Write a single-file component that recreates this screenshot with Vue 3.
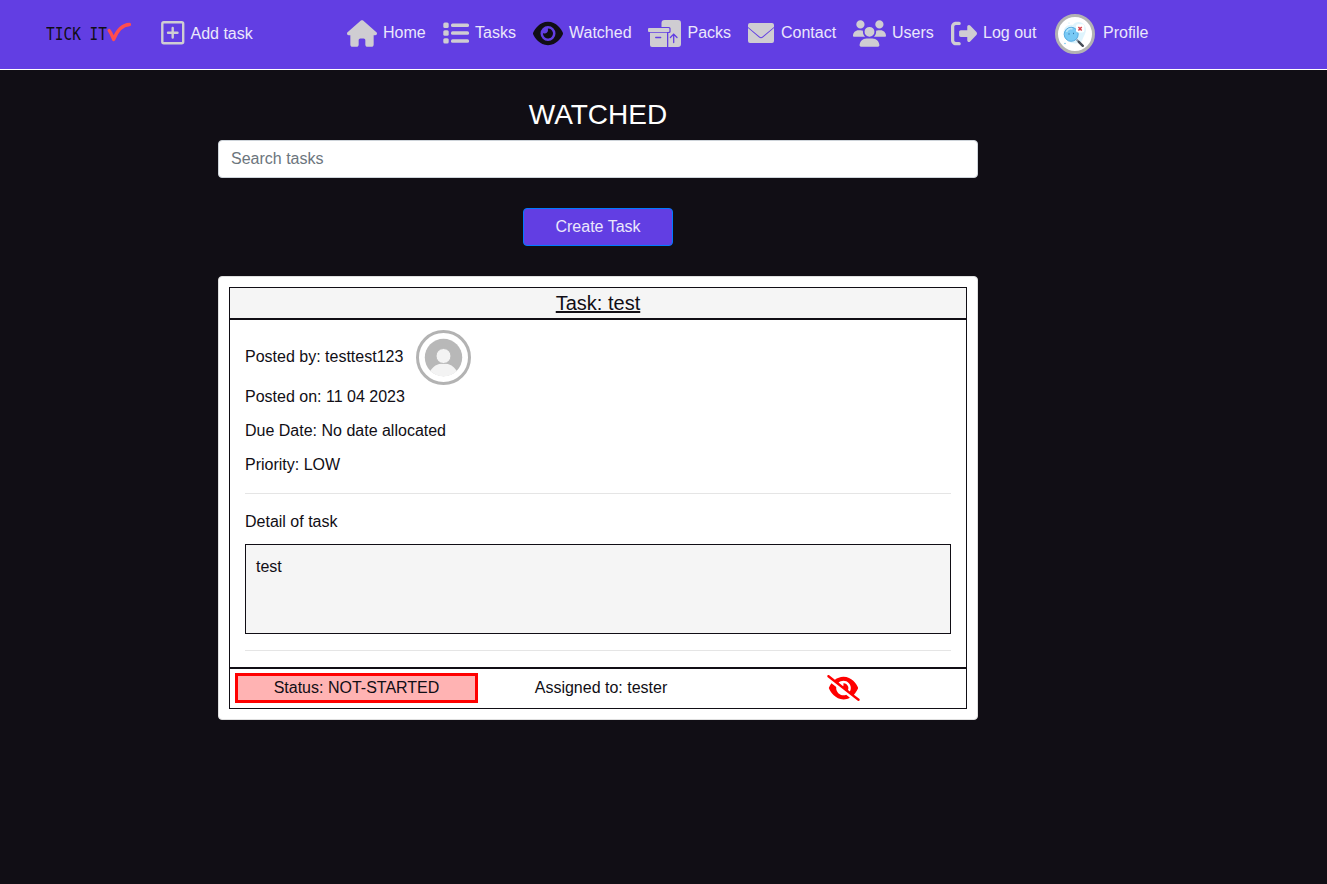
<script setup>
const links = [
  { id: 'home', label: 'Home' },
  { id: 'tasks', label: 'Tasks' },
  { id: 'watched', label: 'Watched' },
  { id: 'packs', label: 'Packs' },
  { id: 'contact', label: 'Contact' },
  { id: 'users', label: 'Users' },
  { id: 'logout', label: 'Log out' },
  { id: 'profile', label: 'Profile' }
]
</script>

<template>
  <div class="page">
    <header class="nav">
      <svg class="logo" width="88" height="24" viewBox="0 0 88 24">
        <text x="0" y="18" textLength="61" lengthAdjust="spacingAndGlyphs">TICK IT</text>
        <path d="M63.200 8.500c2 2.500 3 5.500 4.500 9C70.500 10 75.500 2.800 83.500 2.500" fill="none" stroke="#ff4d4d" stroke-width="3.300" stroke-linecap="round" stroke-linejoin="round" />
      </svg>
      <a class="add">
        <svg width="24" height="24" viewBox="0 0 24 24" fill="none" stroke="#cfcdd2" stroke-linecap="round">
          <rect x="1.300" y="1.300" width="20.900" height="20.900" rx="1.500" stroke-width="2.400" />
          <path d="M11.700 7v9.500M7 11.700h9.500" stroke-width="2.400" />
        </svg>
        <span>Add task</span>
      </a>
      <nav class="links">
        <a v-for="link in links" :key="link.id" class="link" :class="link.id">
          <svg v-if="link.id === 'home'" width="30" height="27" viewBox="0 0 576 512"><path d="M575.8 255.5c0 18-15 32.1-32 32.1h-32l.7 160.2c0 2.7-.2 5.4-.5 8.1V472c0 22.1-17.9 40-40 40H456c-1.1 0-2.200 0-3.300-.1c-1.400 .1-2.800 .1-4.200 .1H416 392c-22.1 0-40-17.9-40-40V448 384c0-17.7-14.3-32-32-32H256c-17.7 0-32 14.3-32 32v64 24c0 22.1-17.9 40-40 40H160 128.1c-1.500 0-3-.1-4.500-.2c-1.200 .1-2.400 .2-3.600 .2H104c-22.1 0-40-17.9-40-40V360c0-.9 0-1.900 .1-2.800V287.600H32c-18 0-32-14-32-32.100c0-9 3-17 10-24L266.400 8c7-7 15-8 22-8s15 2 21 7L564.800 231.500c8 7 12 15 11 24z" /></svg>
          <svg v-else-if="link.id === 'tasks'" width="26" height="22" viewBox="0 0 26 22">
            <rect x=".3" y=".5" width="5.400" height="5.400" rx="1.500" /><rect x=".3" y="8.300" width="5.400" height="5.400" rx="1.500" /><rect x=".3" y="16.200" width="5.400" height="5.400" rx="1.500" />
            <rect x="8" y="1.500" width="18" height="3.400" rx="1.500" /><rect x="8" y="9.300" width="18" height="3.400" rx="1.500" /><rect x="8" y="17.300" width="18" height="3.400" rx="1.500" />
          </svg>
          <svg v-else-if="link.id === 'watched'" width="30" height="27" viewBox="0 0 576 512"><path d="M288 32c-80.8 0-145.500 36.800-192.600 80.600C48.600 156 17.300 208 2.500 243.700c-3.300 7.900-3.300 16.700 0 24.600C17.300 304 48.600 356 95.400 399.400C142.500 443.200 207.200 480 288 480s145.500-36.800 192.600-80.600c46.800-43.500 78.100-95.400 93-131.100c3.300-7.900 3.300-16.700 0-24.600c-14.900-35.700-46.200-87.700-93-131.100C433.500 68.800 368.800 32 288 32zM144 256a144 144 0 1 1 288 0 144 144 0 1 1 -288 0zm144-64c0 35.300-28.700 64-64 64c-7.100 0-13.900-1.200-20.300-3.300c-5.500-1.800-11.900 1.600-11.700 7.400c.3 6.900 1.300 13.800 3.200 20.700c13.700 51.200 66.400 81.600 117.600 67.900s81.600-66.400 67.900-117.600c-11.100-41.500-47.800-69.400-88.600-71.100c-5.800-.2-9.200 6.100-7.400 11.700c2.100 6.400 3.300 13.200 3.300 20.300z" /></svg>
          <svg v-else-if="link.id === 'packs'" width="33" height="27" viewBox="0 0 33 27">
            <path d="M13.500 7V3q0-3 3-3H30q3 0 3 3V24q0 3-3 3H20.300V13h.7q1.600 0 1.600-1.600V8.600Q22.600 7 21 7z" />
            <path d="M1 8H20.500q.9 0 .9.900V11q0 .9-.9.900H1Q0 11.900 0 11V9Q0 8 1 8zM2 12.700H19V27H4q-2 0-2-2z" />
            <path class="cut" d="M7.700 17.500h5M25.700 22.500V14.300M22.400 17.500l3.300-3.400 3.300 3.400" />
          </svg>
          <svg v-else-if="link.id === 'contact'" width="26" height="20" viewBox="0 0 26 20">
            <path d="M2 0H24q2 0 2 2v2L14.500 13.500q-1.500 1.300-3 0L0 4V2Q0 0 2 0zM0 5L10.800 14.300q2.200 1.700 4.400 0L26 5V18q0 2-2 2H2q-2 0-2-2z" />
          </svg>
          <svg v-else-if="link.id === 'users'" width="33" height="27" viewBox="0 0 640 512"><path d="M144 0a80 80 0 1 1 0 160A80 80 0 1 1 144 0zM512 0a80 80 0 1 1 0 160A80 80 0 1 1 512 0zM0 298.700C0 239.800 47.800 192 106.700 192h42.700c15.900 0 31 3.500 44.600 9.700c-1.300 7.200-1.900 14.700-1.900 22.300c0 38.200 16.800 72.500 43.300 96H21.300C9.600 320 0 310.400 0 298.700zM405.300 320c26.600-23.500 43.300-57.800 43.300-96c0-7.600-.7-15-1.900-22.300c13.600-6.300 28.700-9.700 44.600-9.700h42.700C592.200 192 640 239.800 640 298.700c0 11.800-9.600 21.300-21.300 21.300H405.300zM224 224a96 96 0 1 1 192 0 96 96 0 1 1 -192 0zM128 485.300C128 411.700 187.700 352 261.300 352H378.700C452.300 352 512 411.700 512 485.300c0 14.700-11.900 26.700-26.700 26.700H154.700c-14.700 0-26.700-11.900-26.700-26.700z" /></svg>
          <svg v-else-if="link.id === 'logout'" width="26" height="27" viewBox="0 0 512 512" preserveAspectRatio="none"><path d="M377.900 105.900L500.700 228.700c7.200 7.200 11.300 17.100 11.300 27.300s-4.100 20.100-11.300 27.300L377.900 406.100c-6.400 6.400-15 9.900-24 9.900c-18.700 0-33.900-15.200-33.900-33.900l0-62.100-128 0c-17.700 0-32-14.300-32-32l0-64c0-17.700 14.300-32 32-32l128 0 0-62.100c0-18.700 15.200-33.900 33.900-33.900c9 0 17.600 3.600 24 9.900zM160 96L96 96c-17.700 0-32 14.300-32 32l0 256c0 17.700 14.300 32 32 32l64 0c17.700 0 32 14.300 32 32s-14.300 32-32 32l-64 0c-53 0-96-43-96-96L0 128C0 75 43 32 96 32l64 0c17.700 0 32 14.300 32 32s-14.300 32-32 32z" /></svg>
          <svg v-else width="40" height="40" viewBox="0 0 40 40">
            <circle cx="20" cy="20" r="18.500" fill="#fff" stroke="#b3b3b3" stroke-width="3" />
            <path d="M9 22C7 14 12 10 18 11C20 7 28 7 30 12C33 18 28 22 27 27C22 32 11 29 9 22z" fill="#dff4fd" />
            <path d="M21.500 25.500l2 2" stroke="#8a97a5" stroke-width="1.800" />
            <path d="M23.800 27.800l4 4" stroke="#454b55" stroke-width="2.400" stroke-linecap="round" />
            <circle cx="16.200" cy="20.300" r="7" fill="#78c9f5" stroke="#58ace0" stroke-width="1" />
            <path d="M11.500 18c1-3 4-4 6-3" stroke="#b8e6fb" stroke-width="1.500" fill="none" />
            <path d="M14 19.300v1.300M18.500 18.800v1.300" stroke="#28669a" stroke-width=".9" fill="none" />
            <rect x="21" y="10.300" width="8.300" height="8.300" rx="2" fill="#fff" />
            <path d="M23.400 12.900l3.300 3.500M26.700 12.900l-3.300 3.500" stroke="#d9434e" stroke-width="1.500" />
            <circle cx="10" cy="29.500" r=".7" fill="#55b7e8" /><circle cx="14" cy="9" r=".6" fill="#b9e7f9" />
          </svg>
          <span>{{ link.label }}</span>
        </a>
      </nav>
    </header>

    <main class="content">
      <h1>WATCHED</h1>
      <input class="search" type="text" placeholder="Search tasks" />
      <button class="create">Create Task</button>

      <article class="card">
        <h2 class="card-title">Task: test</h2>
        <section class="card-body">
          <div class="poster">
            <span>Posted by: testtest123</span>
            <svg width="55" height="55" viewBox="0 0 55 55">
              <circle cx="27.500" cy="27.500" r="26" fill="#fff" stroke="#b3b3b3" stroke-width="3" />
              <circle cx="27.500" cy="27.500" r="18.700" fill="#b8b8b8" />
              <path d="M14.200 41C17 36.500 21 33.500 27.500 33.500S38 36.500 40.800 41A18.700 18.700 0 0 1 14.200 41z" fill="#f3f3f3" />
              <circle cx="27.500" cy="26" r="7.500" fill="#f3f3f3" stroke="#b8b8b8" stroke-width="1" />
            </svg>
          </div>
          <p>Posted on: 11 04 2023</p>
          <p>Due Date: No date allocated</p>
          <p>Priority: LOW</p>
          <hr />
          <p>Detail of task</p>
          <div class="detail">test</div>
          <hr />
        </section>
        <footer class="card-footer">
          <div class="status">Status: NOT-STARTED</div>
          <div class="assigned">Assigned to: tester</div>
          <div class="unwatch">
            <svg width="33" height="26" viewBox="0 0 640 512"><path d="M38.800 5.100C28.400-3.100 13.300-1.200 5.100 9.200S-1.200 34.700 9.200 42.900l592 464c10.400 8.200 25.500 6.300 33.700-4.100s6.300-25.500-4.100-33.700L525.600 386.700c39.600-40.600 66.400-86.100 79.900-118.400c3.300-7.900 3.300-16.700 0-24.600c-14.900-35.700-46.200-87.700-93-131.100C465.500 68.800 400.800 32 320 32c-68.200 0-125 26.300-169.300 60.800L38.800 5.100zM223.100 149.500C248.600 126.200 282.700 112 320 112c79.500 0 144 64.500 144 144c0 24.900-6.300 48.300-17.400 68.700L408 294.500c8.400-19.300 10.600-41.400 4.800-63.300c-11.100-41.500-47.800-69.400-88.600-71.100c-5.800-.2-9.200 6.100-7.400 11.700c2.100 6.400 3.300 13.200 3.300 20.300c0 10.200-2.400 19.800-6.600 28.300l-90.300-70.800zM373 389.900c-16.400 6.500-34.300 10.100-53 10.100c-79.500 0-144-64.500-144-144c0-6.900 .5-13.600 1.400-20.200L83.100 161.500C60.300 191.200 44 220.800 34.500 243.700c-3.300 7.900-3.300 16.700 0 24.600c14.900 35.700 46.200 87.700 93 131.100C174.500 443.200 239.200 480 320 480c47.800 0 89.900-12.900 126.200-32.500L373 389.900z" /></svg>
          </div>
        </footer>
      </article>
    </main>
  </div>
</template>

<style>
body { margin: 0; background: #110e15; }
</style>

<style scoped>
* { box-sizing: border-box; }
.page {
  min-height: 884px;
  background: #110e15;
  color: #110e15;
  font: 16px/24px "Liberation Sans", Arial, sans-serif;
}
.nav {
  display: flex;
  height: 70px;
  padding-left: 46px;
  background: #623ee3;
  border-bottom: 1px solid #fff;
  color: #ebe7fb;
}
svg { display: block; flex: none; }
.logo { margin: 22px 27px 0 0; }
.logo text { font: 17.5px "DejaVu Sans Mono", monospace; fill: #110e15; }
.add {
  display: flex;
  align-items: flex-start;
  align-self: flex-start;
  gap: 5.5px;
  width: 186px;
  margin-top: 21px;
}
.add span { padding-top: 1px; }
.links {
  display: grid;
  grid-template-columns: 96px 90px 115px 100px 105px 98px 104px 110px;
  align-items: center;
  height: 66px;
}
.link {
  display: flex;
  align-items: center;
  gap: 6px;
  height: 40px;
  fill: #cfcdd2;
  white-space: nowrap;
}
.watched { fill: #110e15; }
.packs { gap: 6.500px; }
.contact { gap: 7px; }
.profile { gap: 8px; }
.profile svg { margin-top: 2px; }
.cut { fill: none; stroke: #623ee3; stroke-width: 1.3; stroke-linecap: round; }
.content {
  display: flex;
  flex-direction: column;
  align-items: center;
  width: 760px;
  margin-left: 218px;
  padding-top: 28px;
}
h1 {
  margin: 0 0 9px;
  color: #fff;
  font-size: 28px;
  font-weight: 400;
  line-height: 33px;
}
.search {
  width: 100%;
  height: 38px;
  padding: 6px 12px;
  border: 1px solid #ced4da;
  border-radius: 4px;
  background: #fff;
  font: inherit;
}
.search::placeholder { color: #6c757d; opacity: 1; }
.create {
  width: 150px;
  height: 38px;
  margin: 30px 0;
  padding: 0;
  border: 1px solid #007bff;
  border-radius: 4px;
  background: #623ee3;
  color: #ebe7fb;
  font: inherit;
}
.card {
  width: 100%;
  height: 444px;
  padding: 10px;
  border: 1px solid #dfdfdf;
  border-radius: 4px;
  background: #fff;
}
.card-title {
  height: 32px;
  margin: 0;
  border: 1px solid #110e15;
  background: #f5f5f5;
  font-size: 20px;
  font-weight: 400;
  line-height: 30px;
  text-align: center;
  text-decoration: underline;
}
.card-body {
  height: 349px;
  padding: 10px 15px 0;
  border: 1px solid #110e15;
}
.poster { display: flex; gap: 13px; height: 55px; }
.poster span { padding-top: 15px; }
p { margin: 0 0 10px; }
hr { margin: 16px 0; border: 0; border-top: 1px solid #e5e5e5; }
.detail {
  height: 90px;
  padding: 10px;
  border: 1px solid #110e15;
  background: #f5f5f5;
}
.card-footer {
  display: grid;
  grid-template-columns: 243px 246px 238px;
  height: 41px;
  padding: 4px 5px;
  border: 1px solid #110e15;
  text-align: center;
}
.status {
  height: 30px;
  border: 3px solid #f00;
  background: #ffb3b3;
}
.assigned { padding-top: 3px; }
.unwatch { display: flex; justify-content: center; padding-top: 2px; fill: #f00; }
</style>
